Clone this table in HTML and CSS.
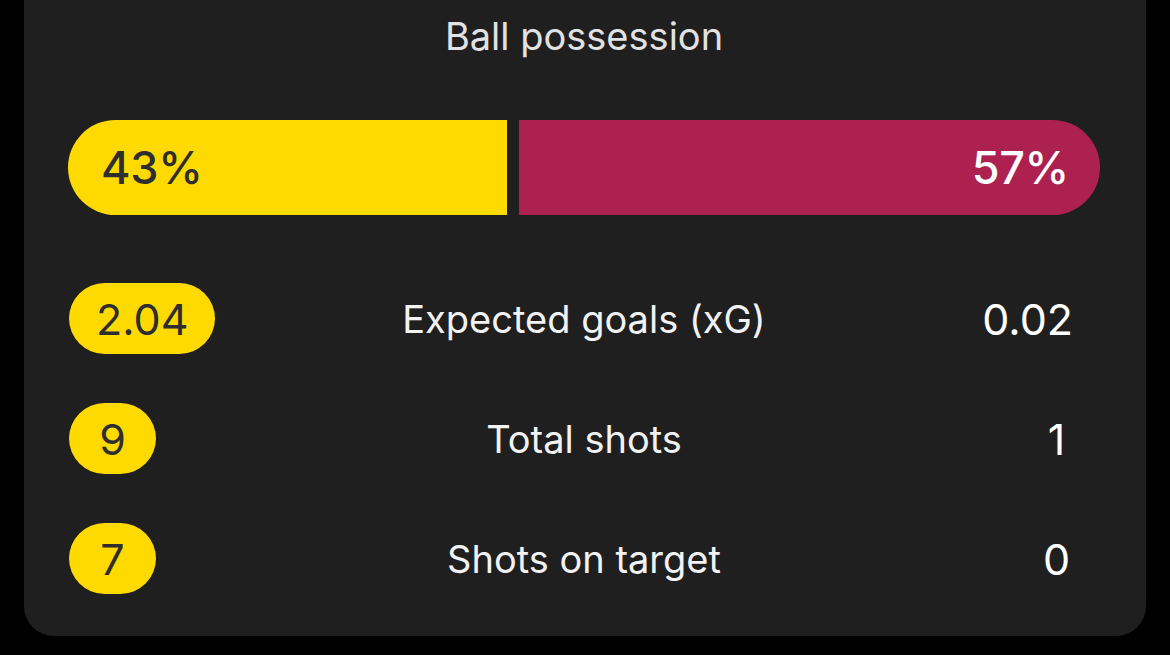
FILE: index.html
```html
<!DOCTYPE html>
<html lang="en">
<head>
<meta charset="utf-8">
<title>Match stats</title>
<link rel="stylesheet" href="styles.css">
</head>
<body>
<section class="card">
  <h2 class="title">Ball possession</h2>
  <div class="possession">
    <div class="seg seg-home" style="flex-grow: 43"><span class="seg-text">43%</span></div>
    <div class="seg seg-away" style="flex-grow: 57"><span class="seg-text">57%</span></div>
  </div>
  <div class="stats">
    <div class="row">
      <span class="val val-home">2.04</span>
      <span class="label">Expected goals (xG)</span>
      <span class="val val-away">0.02</span>
    </div>
    <div class="row">
      <span class="val val-home">9</span>
      <span class="label">Total shots</span>
      <span class="val val-away">1</span>
    </div>
    <div class="row">
      <span class="val val-home">7</span>
      <span class="label">Shots on target</span>
      <span class="val val-away">0</span>
    </div>
  </div>
</section>
</body>
</html>
```

FILE: styles.css
```css
html, body {
  margin: 0;
  padding: 0;
  background: #000;
}

body {
  width: 1170px;
  height: 655px;
  overflow: hidden;
  font-family: Inter, "Noto Sans", "Liberation Sans", sans-serif;
}

.card {
  margin: 0 24px;
  background: #1f1f1f;
  border-radius: 0 0 30px 30px;
  padding: 13px 46px 42px 44px;
  display: flex;
  flex-direction: column;
}

.title {
  margin: 0;
  font-size: 38px;
  line-height: 46px;
  font-weight: 400;
  color: #e2e2e2;
  text-align: center;
}

.possession {
  margin-top: 61px;
  height: 95px;
  display: flex;
  gap: 12px;
}

.seg {
  flex-shrink: 1;
  flex-basis: 0;
  min-width: 0;
  display: flex;
  align-items: center;
  font-size: 45px;
  font-weight: 500;
  letter-spacing: -0.3px;
}

.seg-home {
  background: #ffda00;
  color: #2e2e2e;
  border-radius: 48px 0 0 48px;
}

.seg-home .seg-text {
  margin-left: 33px;
}

.seg-away {
  background: #ad2151;
  color: #fff;
  border-radius: 0 48px 48px 0;
  justify-content: flex-end;
}

.seg-away .seg-text {
  margin-right: 31px;
}

.stats {
  margin-top: 68px;
  display: flex;
  flex-direction: column;
  gap: 49px;
}

.row {
  display: grid;
  grid-template-columns: 1fr auto 1fr;
  align-items: center;
  height: 71px;
}

.val {
  height: 71px;
  min-width: 33px;
  padding: 0 27px;
  border-radius: 36px;
  display: flex;
  align-items: center;
  justify-content: center;
  font-size: 43px;
  font-weight: 400;
}

.val-home {
  justify-self: start;
  margin-left: 1px;
  background: #ffda00;
  color: #2e2e2e;
}

.val-away {
  justify-self: end;
  color: #fff;
}

.label {
  font-size: 38px;
  color: #f2f2f2;
  text-align: center;
}
```
